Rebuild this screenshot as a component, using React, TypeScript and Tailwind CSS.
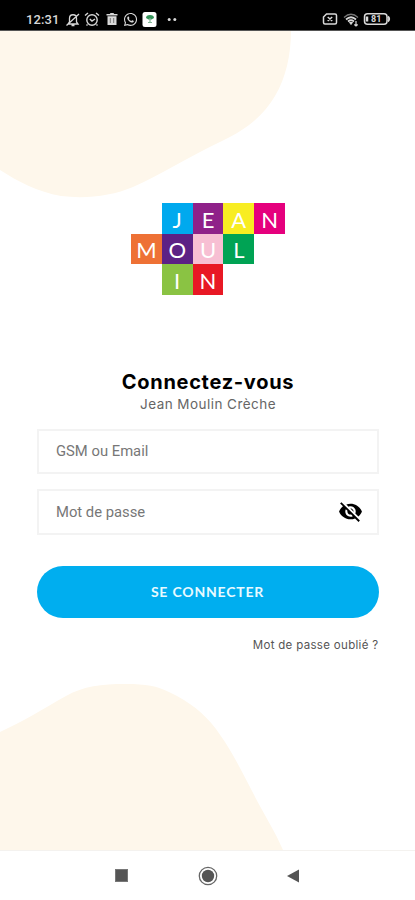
import React from 'react';
import { MdVisibilityOff } from 'react-icons/md';
import { FaWhatsapp } from 'react-icons/fa';

const tiles: { letter: string; style: string }[] = [
  { letter: '', style: '' },
  { letter: 'J', style: 'bg-[#00a9ee]' },
  { letter: 'E', style: 'bg-[#8f2189]' },
  { letter: 'A', style: 'bg-[#f8ed22]' },
  { letter: 'N', style: 'bg-[#e5007d]' },
  { letter: 'M', style: 'bg-[#ee7135]' },
  { letter: 'O', style: 'bg-[#5c2185]' },
  { letter: 'U', style: 'bg-[#f7bfd3]' },
  { letter: 'L', style: 'bg-[#00a354]' },
  { letter: '', style: '' },
  { letter: '', style: '' },
  { letter: 'I', style: 'bg-[#8ac343]' },
  { letter: 'N', style: 'bg-[#e81824]' },
];

function StatusBar() {
  return (
    <header className="flex h-[31px] shrink-0 items-start border-b border-[#555] bg-black pt-3 pl-[26px] text-[#d8d8d8]">
      <span className="w-[34px] whitespace-nowrap font-['Roboto',sans-serif] text-[13px] leading-[16px] font-medium tracking-[0.1px]">12:31</span>
      <svg className="ml-[5px] h-4 w-4" viewBox="0 0 16 16" fill="none" stroke="currentColor" strokeWidth="1.3">
        <path d="M3 12h10l-1.5-2V6.5C11.500 1.500 4.500 1.500 4.500 6.500V10zM6.500 13.500h3M14 2 1.500 13.500" />
      </svg>
      <svg className="ml-[3px] h-4 w-4" viewBox="0 0 16 16" fill="none" stroke="currentColor" strokeWidth="1.4">
        <circle cx="8" cy="8" r="5.200" />
        <path d="m1 3.500 3-2.500M15 3.500 12 1M5.800 7 8 9l3-2M3.500 12.500l-1 1M12.500 12.500l1 1" />
      </svg>
      <svg className="ml-[4px] h-4 w-4" viewBox="0 0 16 16" fill="currentColor">
        <path d="M2.500 2h3.300l.7-1h3l.7 1h3.300v1.500h-11zM3.500 4.200h9V13h-9z" />
        <path d="M6.300 6v5M9.700 6v5" stroke="#777" />
      </svg>
      <FaWhatsapp className="ml-[3px] h-[15px] w-[15px]" />
      <svg className="ml-[4px] h-4 w-4" viewBox="0 0 16 16">
        <rect x="0.500" y="0" width="14" height="15" rx="2.500" fill="#fff" />
        <path d="M4 6q0-3 4-3t4 3l-2.500 1.500h-3z" fill="#35945a" />
        <path d="M8 6v4M6 10.500h4" stroke="#82b797" strokeWidth="1.200" />
      </svg>
      <svg className="ml-[9px] h-4 w-3" viewBox="0 0 12 16" fill="currentColor">
        <circle cx="2.200" cy="7.500" r="1.500" /><circle cx="7.800" cy="7.500" r="1.500" />
      </svg>
      <svg className="ml-[143px] h-4 w-4" viewBox="0 0 16 16" fill="none" stroke="currentColor" strokeWidth="1.500">
        <path d="M4.500 2H13q1.500 0 1.500 1.500v7Q14.500 12 13 12H3q-1.500 0-1.500-1.500V5zM5.700 5l4.500 4M10.200 5 5.700 9" />
      </svg>
      <svg className="ml-[5px] h-4 w-4" viewBox="0 0 16 16" fill="none" stroke="currentColor">
        <path d="M1 5.500Q8-1 15 5.500" stroke="#777" strokeWidth="1.200" />
        <path d="M3 7.500q5-4.500 10 0M5 9.500q3-2.500 6 0" strokeWidth="1.700" />
        <path d="M6.500 10.500 8 12.500l1.500-2z" fill="currentColor" />
        <path d="M13 9v5m-1.700-1.500L13 14l1.700-1.500" strokeWidth="1.200" />
      </svg>
      <svg className="ml-[4px] h-4 w-[28px]" viewBox="0 0 28 16" fill="none" stroke="currentColor" strokeWidth="1.500">
        <rect x="1.500" y="1.700" width="22.500" height="10.600" rx="3" />
        <path d="M25 4.500q2.500 2.500 0 5" strokeWidth="1.800" />
        <path d="M4 4.500v5" strokeWidth="2.500" />
        <text x="8" y="10.200" fill="currentColor" stroke="none" className="font-['Roboto',sans-serif] text-[9px] font-bold">81</text>
      </svg>
    </header>
  );
}

export default function App() {
  return (
    <div className="flex h-[900px] w-full flex-col overflow-hidden bg-white">
      <StatusBar />
      <main className="relative flex h-[819px] shrink-0 flex-col items-center">
        <svg className="pointer-events-none absolute inset-0 h-[819px] w-[415px]" viewBox="0 31 415 819" fill="#fef7eb">
          <path d="M0 31H291C291 54 286 78 275 96C264 115 247 129 222 141C190 156 162 174 133 187C112 196 86 199 61 196C38 192 17 181 0 170Z" />
          <path d="M0 732C22 722 43 709 66 696C84 686 101 684 126 684C146 684 157 686 169 692C190 702 204 713 216 729C232 751 240 768 252 791C262 811 275 831 283 850H0Z" />
        </svg>

        <div className="relative mt-[172px] ml-px grid h-[92px] w-[154px] shrink-0 grid-cols-5 grid-rows-3" role="img" aria-label="Jean Moulin">
          {tiles.map(({ letter, style }, i) => (
            <div key={i} className={`flex items-center justify-center ${style}`}>
              <span className="pt-[3px] font-['Lato',sans-serif] text-[22px] leading-none text-white">{letter}</span>
            </div>
          ))}
        </div>

        <h1 className="relative mt-[73px] ml-px whitespace-nowrap font-['Inter',sans-serif] text-[20px] leading-[28px] font-bold tracking-[0.700px] text-black">Connectez-vous</h1>
        <p className="relative ml-px whitespace-nowrap font-['Inter',sans-serif] text-[13.500px] leading-[16px] tracking-[0.450px] text-[#666]">Jean Moulin Crèche</p>

        <form className="relative mt-[17px] flex w-[342px] flex-col" onSubmit={(e) => e.preventDefault()}>
          <div className="flex h-[45px] items-center border-2 border-[#f3f3f3] bg-white px-[17.500px]">
            <input aria-label="GSM ou Email" placeholder="GSM ou Email" className="w-full bg-transparent font-['Roboto',sans-serif] text-[14.800px] outline-none placeholder:text-[#777]" />
          </div>
          <div className="mt-[15px] flex h-[46px] items-center border-2 border-[#f3f3f3] bg-white pr-[14px] pl-[17.500px]">
            <input type="password" aria-label="Mot de passe" placeholder="Mot de passe" className="min-w-0 flex-1 bg-transparent font-['Roboto',sans-serif] text-[14.800px] outline-none placeholder:text-[#777]" />
            <MdVisibilityOff className="mb-px h-[25px] w-[25px] text-black" />
          </div>
          <button className="mt-[31px] h-[52px] rounded-full bg-[#00aeef] pb-px font-['Lato',sans-serif] text-[14px] font-bold tracking-[0.800px] text-[#e8faff]">SE CONNECTER</button>
          <a href="#" className="mt-[19px] self-end whitespace-nowrap font-['Inter',sans-serif] text-[11.500px] leading-[16px] tracking-[0.320px] text-[#555]">Mot de passe oublié ?</a>
        </form>
      </main>

      <nav className="flex h-[50px] shrink-0 items-center justify-between border-t border-[#f4f2ef] bg-white px-[115px]">
        <span className="size-[13px] border border-[#777] bg-[#555]" />
        <svg className="h-5 w-5" viewBox="0 0 20 20">
          <circle cx="10" cy="10" r="8.700" fill="none" stroke="#666" strokeWidth="1.300" />
          <circle cx="10" cy="10" r="6.200" fill="#555" />
        </svg>
        <svg className="h-[14px] w-[13px]" viewBox="0 0 13 14"><path d="M12 .5v13L0 7z" fill="#555" /></svg>
      </nav>
    </div>
  );
}
